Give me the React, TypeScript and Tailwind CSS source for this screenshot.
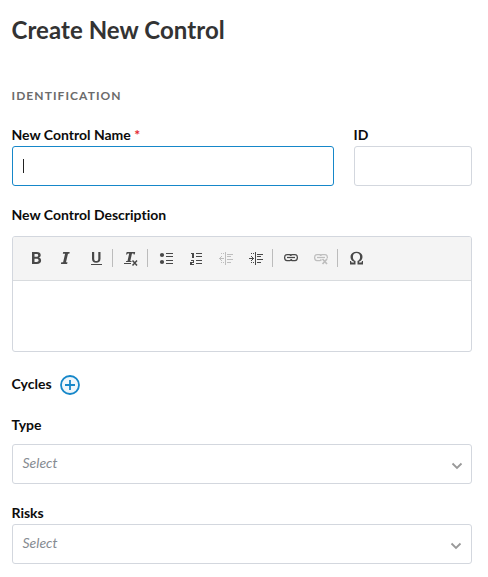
import type { ReactNode } from 'react';

function Label({ children }: { children: ReactNode }) {
  return <div className="-ml-[0.5px] h-5 whitespace-nowrap text-[14px] font-bold leading-5 text-[#0c0c0c] [font-variant-ligatures:none]">{children}</div>;
}

function Tool({ children, disabled, name }: { children: ReactNode; disabled?: boolean; name: string }) {
  return (
    <button aria-label={name} className={`flex h-7 w-[30px] items-center justify-center ${disabled ? 'text-[#bebebe]' : 'text-[#484848]'}`}>
      <svg width="16" height="16" viewBox="0 0 16 16" fill="currentColor">{children}</svg>
    </button>
  );
}

function Separator() {
  return <div className="ml-px mr-[3px] h-[18px] w-px bg-[#bcbcbc]" />;
}

function ChainLinks() {
  return (
    <g fill="none" stroke="currentColor" strokeWidth="1.25">
      <path d="M8.500 5.500Q8.300 4.500 7 4.500H4Q1.600 4.500 1.600 7.500T4 10.500H7Q8.500 10.500 8.800 9.200" />
      <path d="M7.500 9.500Q7.700 10.500 9 10.500h3q2.400 0 2.400-3T12 4.500H9Q7.500 4.500 7.200 5.800" />
      <path d="M4 7.500h8" />
    </g>
  );
}

function IndentLines({ children }: { children: ReactNode }) {
  return (
    <g shapeRendering="crispEdges">
      <path d="M7 2h1v13H7zM9 4h6v1H9zM9 6h4v1H9zM9 9h6v1H9zM9 12h4v1H9zM3 3h1v1H3zM5 3h1v1H5zM3 12h1v1H3zM5 12h1v1H5z" />
      {children}
    </g>
  );
}

function Select({ arrow }: { arrow: string }) {
  return (
    <button className={`flex h-10 w-full items-center justify-between rounded-[3px] border border-[#d3d7de] bg-white pl-[9.5px] ${arrow}`}>
      <span className="-mt-0.5 text-[14px] italic leading-5 text-[#858b91]">Select</span>
      <svg className="mt-[3px]" width="12" height="8" viewBox="0 0 12 8" fill="none" stroke="#999" strokeWidth="1.8">
        <path d="M1.5 1.5 6 6l4.5-4.5" />
      </svg>
    </button>
  );
}

export default function App() {
  return (
    <main className="h-[577px] w-[488px] overflow-hidden bg-white pl-3 pr-4 pt-[14px] font-['Lato',sans-serif]">
      <h1 className="-ml-[0.5px] h-8 whitespace-nowrap text-[24px] font-bold leading-8 tracking-[0.06px] text-[#333]">Create New Control</h1>
      <h2 className="-ml-[0.5px] mt-10 h-5 text-[12px] font-bold leading-5 tracking-[1.08px] text-[#6b6b6b]">IDENTIFICATION</h2>
      <div className="mt-[19px] flex gap-5">
        <div className="w-[322px]">
          <Label>New Control Name <span className="font-bold text-[#e3262f]">*</span></Label>
          <div className="mt-px flex h-10 items-center rounded-[3px] border border-[#1687c9] pl-[10px]">
            <span className="h-[14px] w-px bg-[#222]" />
          </div>
        </div>
        <div className="w-[118px]">
          <Label>ID</Label>
          <div className="mt-px h-10 rounded-[3px] border border-[#d3d7de]" />
        </div>
      </div>
      <div className="mt-[19px]"><Label>New Control Description</Label></div>
      <div className="mt-[11px] h-[116px] overflow-hidden rounded-[3px] border border-[#d3d7de]">
        <div className="flex h-11 items-center border-b border-[#d8dbde] bg-[#f4f4f4] pb-px pl-2">
          <Tool name="Bold">
            <path fillRule="evenodd" d="M4 2h4.7c2.7 0 4 1.1 4 3 0 1.3-.7 2.2-1.8 2.6 1.4.4 2.2 1.5 2.2 2.9 0 2.2-1.5 3.5-4.3 3.5H4zm2.5 2v2.8h1.8c1.3 0 1.9-.5 1.9-1.4S9.600 4 8.300 4zm0 4.700V12h2.100c1.400 0 2-.600 2-1.700s-.700-1.600-2-1.600z" />
          </Tool>
          <Tool name="Italic"><path d="M5.200 2h6.500l-.4 1.700H10L8 12.200h1.500L9.100 14H2.900l.4-1.800h1.800l2-8.500H4.800z" /></Tool>
          <Tool name="Underline">
            <path d="M4 2h2.200v6.700c0 1.500.6 2.300 2 2.300s2.100-.8 2.100-2.300V2h2.200v6.700c0 2.700-1.600 4-4.300 4S4 11.400 4 8.700zM3 14h11v1H3z" />
          </Tool>
          <Separator />
          <Tool name="Remove format">
            <path d="M3.700 2h8.500l-.5 2.500h-1l-.2-1H9L7.300 11h1.300l-.2 1H3l.2-1h1.300l1.700-7.500H4.700L4 4.500H3zM1 13h7v1H1z" />
            <path d="m9.500 10.500 4.500 5m0-5-4.500 5" fill="none" stroke="currentColor" strokeWidth="1.500" />
          </Tool>
          <Separator />
          <Tool name="Bulleted list">
            <circle cx="4" cy="5" r="2.100" /><circle cx="4" cy="12" r="2.100" />
            <path shapeRendering="crispEdges" d="M8 3h7v1H8zM8 6h7v1H8zM8 10h7v1H8zM8 13h7v1H8z" />
          </Tool>
          <Tool name="Numbered list">
            <path shapeRendering="crispEdges" d="M4 3h2v5H4V4H3V3zM3 10h3v3H4v1h2v1H2v-3h3v-1H3zM8 3h6v1H8zM8 6h6v1H8zM8 10h6v1H8zM8 13h6v1H8z" />
          </Tool>
          <Tool name="Outdent" disabled>
            <IndentLines><path d="M1 8h5v1H1zM2 7h1v3H2zM3 6h1v1H3zM3 10h1v1H3z" /></IndentLines>
          </Tool>
          <Tool name="Indent">
            <IndentLines><path d="M1 8h5v1H1zM4 7h1v3H4zM3 6h1v1H3zM3 10h1v1H3z" /></IndentLines>
          </Tool>
          <Separator />
          <Tool name="Link"><ChainLinks /></Tool>
          <Tool name="Unlink" disabled>
            <ChainLinks />
            <path d="M8.500 8.500H15v6H8.500z" fill="#f4f4f4" />
            <path d="m9.500 9 4.500 5m0-5-4.500 5" fill="none" stroke="currentColor" strokeWidth="1.700" />
          </Tool>
          <Separator />
          <Tool name="Special character">
            <path d="M2 14.500V11h1l.5 1.500H6V11.700C3.900 10.700 2.500 9.200 2.500 6.900 2.500 3.800 4.900 1.700 8.500 1.700s6 2.100 6 5.200c0 2.300-1.400 3.800-3.500 4.800v.8h2.500L14 11h1v3.500H9.500V11c1.600-.6 2.600-2 2.600-4.100 0-2.400-1.300-4-3.600-4s-3.600 1.600-3.600 4C4.900 9 5.900 10.400 7.500 11v3.500z" />
          </Tool>
        </div>
      </div>
      <div className="mt-[22px] flex h-[22px] items-center gap-2">
        <div className="-mt-0.5"><Label>Cycles</Label></div>
        <svg width="20" height="20" viewBox="0 0 20 20" fill="#eef6fb" stroke="#1687c9" strokeWidth="1.800">
          <circle cx="10" cy="10" r="9" /><path d="M10 5v10M5 10h10" />
        </svg>
      </div>
      <div className="mb-[9px] mt-[19px]"><Label>Type</Label></div>
      <Select arrow="pr-2" />
      <div className="mb-px mt-[19px]"><Label>Risks</Label></div>
      <Select arrow="pr-[9px]" />
    </main>
  );
}
